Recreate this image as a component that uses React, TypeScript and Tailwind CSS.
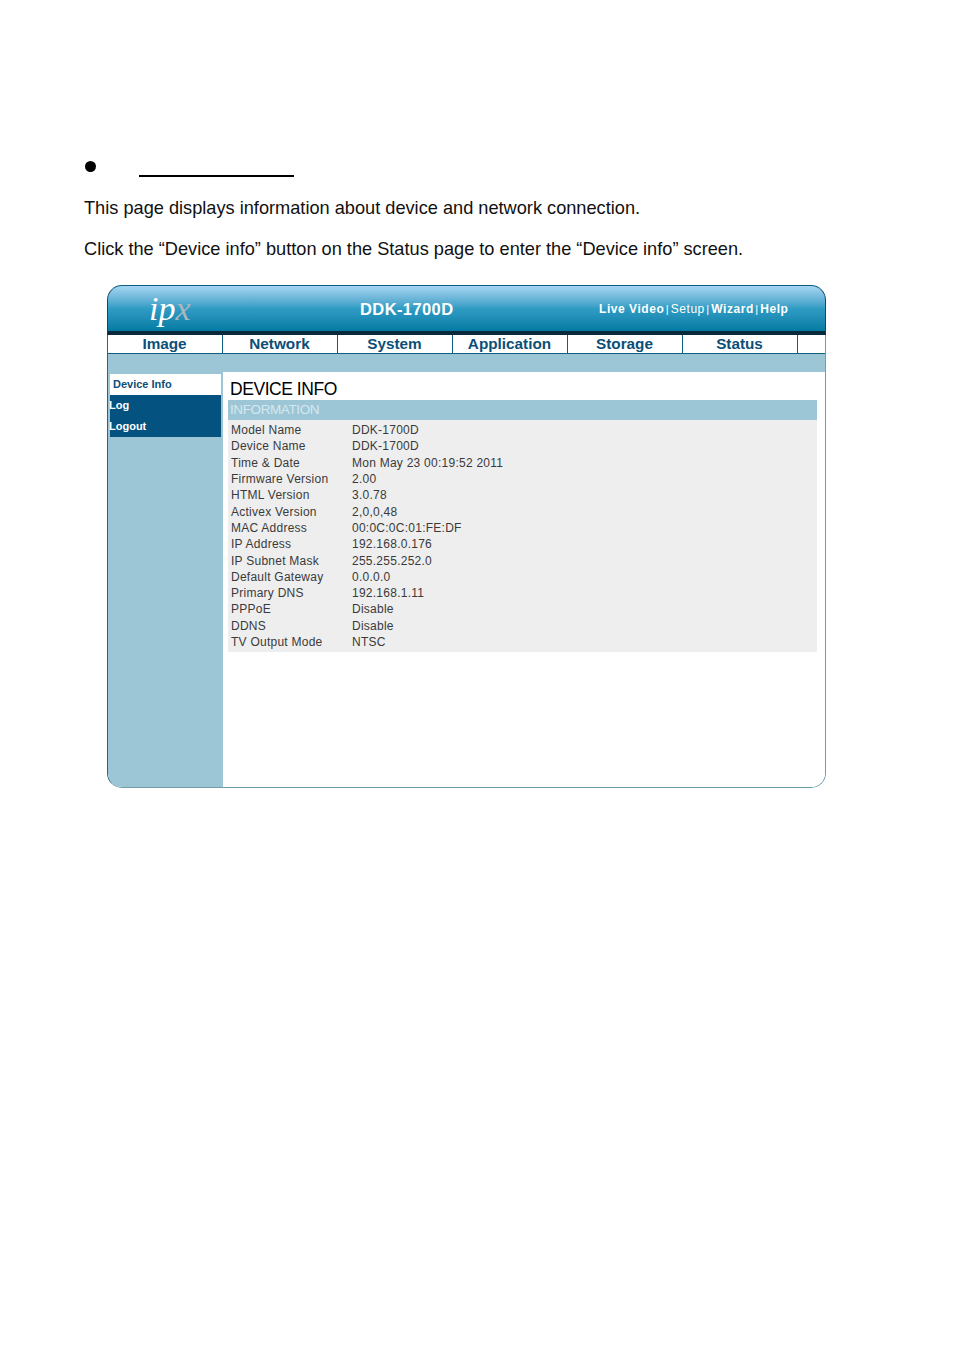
const TABS = ['Image', 'Network', 'System', 'Application', 'Storage', 'Status']

const INFO_ROWS = [
    ['Model Name', 'DDK-1700D'],
    ['Device Name', 'DDK-1700D'],
    ['Time & Date', 'Mon May 23 00:19:52 2011'],
    ['Firmware Version', '2.00'],
    ['HTML Version', '3.0.78'],
    ['Activex Version', '2,0,0,48'],
    ['MAC Address', '00:0C:0C:01:FE:DF'],
    ['IP Address', '192.168.0.176'],
    ['IP Subnet Mask', '255.255.252.0'],
    ['Default Gateway', '0.0.0.0'],
    ['Primary DNS', '192.168.1.11'],
    ['PPPoE', 'Disable'],
    ['DDNS', 'Disable'],
    ['TV Output Mode', 'NTSC'],
]

export default function App() {
    return (
        <div className="h-[1355px] w-[954px] overflow-hidden bg-white pl-[84px] pt-[160px] font-['Liberation_Sans',Arial,sans-serif] text-black">
            <div className="flex h-[17px] items-start">
                <div className="ml-px mt-px h-[11px] w-[11px] rounded-full bg-black" />
                <div className="ml-[43px] mt-[15px] h-[2px] w-[155px] bg-black" />
            </div>

            <p className="mt-[20px] text-[18.2px] leading-[22px] text-[#111111]">This page displays information about device and network connection.</p>
            <p className="mt-[19px] text-[18.2px] leading-[22px] text-[#111111]">Click the “Device info” button on the Status page to enter the “Device info” screen.</p>

            <div className="ml-[23px] mt-[25px] flex h-[503px] w-[719px] flex-col">
                <header className="flex h-[50px] shrink-0 items-center rounded-t-[15px] border-x border-b-[4px] border-t border-x-[#0d4a63] border-b-[#0a2a3c] border-t-[#0c5f7e] bg-gradient-to-b from-[#a6d5f3] via-[#2f9cc4] to-[#007ba3] pt-px text-white">
                    <div className="w-[115px] pl-[41px] font-['Liberation_Serif',serif] text-[34px] italic leading-none">
                        ip<span className="text-[#a9b8be]">x</span>
                    </div>
                    <div className="ml-[137px] w-[239px] text-[16.5px] font-bold tracking-[0.4px]">DDK-1700D</div>
                    <nav className="flex items-center text-[12px] tracking-[0.55px]">
                        <span className="font-bold">Live Video</span>
                        <span className="mx-[1.5px] text-[11px] font-normal">|</span>
                        <span>Setup</span>
                        <span className="mx-[1.5px] text-[11px] font-normal">|</span>
                        <span className="font-bold">Wizard</span>
                        <span className="mx-[1.5px] text-[11px] font-normal">|</span>
                        <span className="font-bold">Help</span>
                    </nav>
                </header>

                <div className="flex min-h-0 flex-1 flex-col overflow-hidden rounded-b-[15px] border-x border-b border-l-[#1f6a7c] border-r-[#6f9eaa] border-b-[#6f9eaa] bg-white">
                    <div className="flex h-[19px] shrink-0 border-b border-[#0c5f7e] bg-white">
                        {TABS.map((tab) => (
                            <div
                                key={tab}
                                className="flex w-[115px] items-center justify-center border-r border-[#0c5f7e] pr-px text-[15.3px] font-bold leading-none text-[#0b4f78]"
                            >
                                {tab}
                            </div>
                        ))}
                    </div>

                    <div className="h-[18px] shrink-0 bg-[#9cc6d6]" />

                    <div className="flex min-h-0 flex-1">
                        <aside className="w-[115px] shrink-0 bg-[#9cc6d6] pl-[2px] pr-[2px] pt-[2px] text-[11px] font-bold">
                            <div className="flex h-[21px] items-center bg-white pl-[3px] text-[#0b4f78]">Device Info</div>
                            <div className="flex h-[21px] items-center bg-[#03527f] text-white"><span className="-ml-px">Log</span></div>
                            <div className="flex h-[21px] items-center bg-[#03527f] text-white"><span className="-ml-px">Logout</span></div>
                        </aside>

                        <main className="flex-1 bg-white pl-[5px] pr-[8px]">
                            <h1 className="pl-[2px] pt-[6px] text-[17.5px] leading-[22px] tracking-[-0.45px]">DEVICE INFO</h1>
                            <div className="flex h-[20px] items-center bg-[#9cc6d6] pl-[2px] pt-px text-[13.5px] tracking-[-0.4px] text-[#d5e8ef]">INFORMATION</div>
                            <div className="bg-[#eeeeee] pb-[2px] pl-[3px] pt-[2px] text-[12px] tracking-[0.25px] text-[#3a3a3a]">
                                {INFO_ROWS.map(([label, value]) => (
                                    <div key={label} className="flex h-[16.3px] items-center">
                                        <div className="w-[121px] shrink-0">{label}</div>
                                        <div>{value}</div>
                                    </div>
                                ))}
                            </div>
                        </main>
                    </div>
                </div>
            </div>
        </div>
    )
}
